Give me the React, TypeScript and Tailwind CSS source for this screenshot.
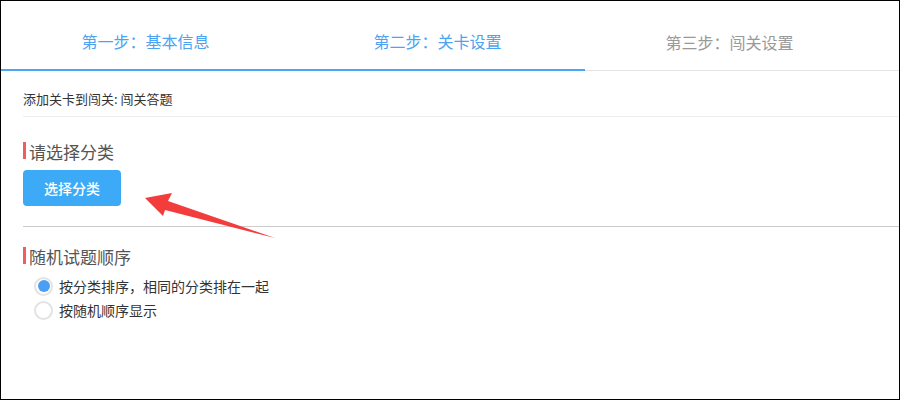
export default function App() {
  const tabs = [
    { label: '第一步：基本信息', done: true },
    { label: '第二步：关卡设置', done: true },
    { label: '第三步：闯关设置', done: false },
  ];

  return (
    <div
      className="relative w-[900px] h-[400px] border border-black bg-white overflow-hidden"
      style={{ fontFamily: '"Noto Sans CJK SC", "Noto Sans", sans-serif' }}
    >
      {/* step tabs */}
      <div className="flex border-b border-[#e4e4e4]">
        {tabs.map((t) => (
          <div
            key={t.label}
            className={
              t.done
                ? 'w-[292px] h-[70px] -mb-px pt-[11px] pr-[3px] flex items-center justify-center text-[16px] text-[#4ba3f1] border-b-2 border-[#4ba7f4]'
                : 'w-[292px] h-[70px] -mb-px pt-[11px] pr-[3px] flex items-center justify-center text-[16px] text-[#999]'
            }
          >
            {t.label}
          </div>
        ))}
      </div>

      <div className="pl-[22px]">
        <div className="h-[46px] pt-[11px] flex items-center text-[13px] text-[#333] border-b border-[#eee]">
          添加关卡到闯关: 闯关答题
        </div>

        <div className="mt-[25px] flex items-center h-[17px]">
          <span className="w-[3px] h-[17px] bg-[#f45b60]" />
          <span className="ml-[3px] pt-[2px] text-[17px] leading-[17px] text-[#555]">请选择分类</span>
        </div>

        <button className="mt-[11px] w-[98px] h-[36px] rounded-[4px] bg-[#3caaf7] text-white text-[14px] font-medium flex items-center justify-center">
          选择分类
        </button>

        <div className="mt-[20px] h-px bg-[#ccc]" />

        <div className="mt-[20px] flex items-center h-[17px]">
          <span className="w-[3px] h-[17px] bg-[#f45b60]" />
          <span className="ml-[3px] pt-[2px] text-[17px] leading-[17px] text-[#555]">随机试题顺序</span>
        </div>

        <div className="mt-[10px] ml-[11px]">
          <label className="h-[24px] flex items-center gap-[6px] text-[14px] text-[#333]">
            <span className="w-[19px] h-[19px] rounded-full border-2 border-[#e3e3e3] flex items-center justify-center">
              <span className="w-[12px] h-[12px] rounded-full bg-[#4a9ff5]" />
            </span>
            按分类排序，相同的分类排在一起
          </label>
          <label className="h-[24px] flex items-center gap-[6px] text-[14px] text-[#333]">
            <span className="w-[19px] h-[19px] rounded-full border-2 border-[#e3e3e3]" />
            按随机顺序显示
          </label>
        </div>
      </div>

      {/* annotation arrow */}
      <svg className="absolute left-0 top-0" width="900" height="400">
        <polygon
          points="144,197 171,192 167,200 274,237 164,209 162,215"
          fill="#f33c3c"
        />
      </svg>
    </div>
  );
}
